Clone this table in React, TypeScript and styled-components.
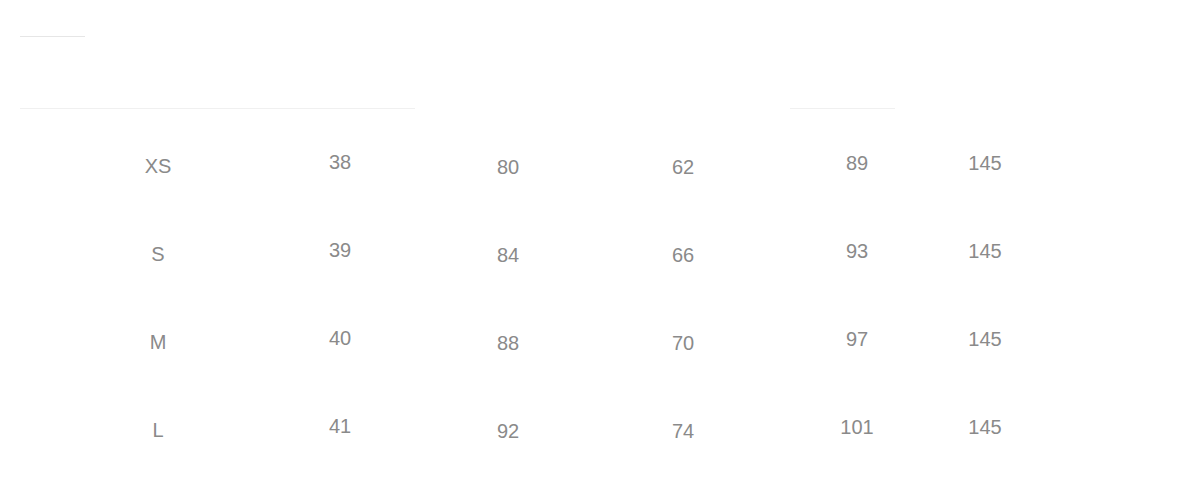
import React from "react";
import styled, { createGlobalStyle } from "styled-components";

const Global = createGlobalStyle`
  html, body { margin: 0; padding: 0; background: #ffffff; }
  body { font-family: "Liberation Sans", Arial, sans-serif; }
`;

const Page = styled.div`
  width: 1179px;
  height: 504px;
  background: #ffffff;
  display: flex;
  flex-direction: column;
  overflow: hidden;
`;

const Header = styled.div`
  height: 119px;
  display: flex;
  flex-direction: column;
  padding: 36px 0 0 20px;
  box-sizing: border-box;
`;

const ShortRule = styled.div`
  width: 65px;
  height: 1px;
  background: #e6e6e6;
`;

const RuleRow = styled.div`
  margin-top: 71px;
  display: flex;
  gap: 375px;
`;

const Rule = styled.div<{ $w: number }>`
  width: ${(p) => p.$w}px;
  height: 1px;
  background: #f0f0f0;
`;

const Table = styled.div`
  display: grid;
  grid-template-columns: 180px 184px 152px 198px 150px 106px;
  grid-auto-rows: 88px;
  padding-left: 68px;
`;

const Cell = styled.div<{ $shift: number }>`
  display: flex;
  align-items: center;
  justify-content: center;
  font-size: 20px;
  color: #8a8a8a;
  transform: translateY(${(p) => p.$shift}px);
`;

const shifts = [3, -1, 4, 4, 0, 0];

const rows = [
  ["XS", "38", "80", "62", "89", "145"],
  ["S", "39", "84", "66", "93", "145"],
  ["M", "40", "88", "70", "97", "145"],
  ["L", "41", "92", "74", "101", "145"],
];

export default function App() {
  return (
    <Page>
      <Global />
      <Header>
        <ShortRule />
        <RuleRow>
          <Rule $w={395} />
          <Rule $w={105} />
        </RuleRow>
      </Header>
      <Table>
        {rows.map((r, i) =>
          r.map((v, j) => (
            <Cell key={`${i}-${j}`} $shift={shifts[j]}>
              {v}
            </Cell>
          ))
        )}
      </Table>
    </Page>
  );
}
